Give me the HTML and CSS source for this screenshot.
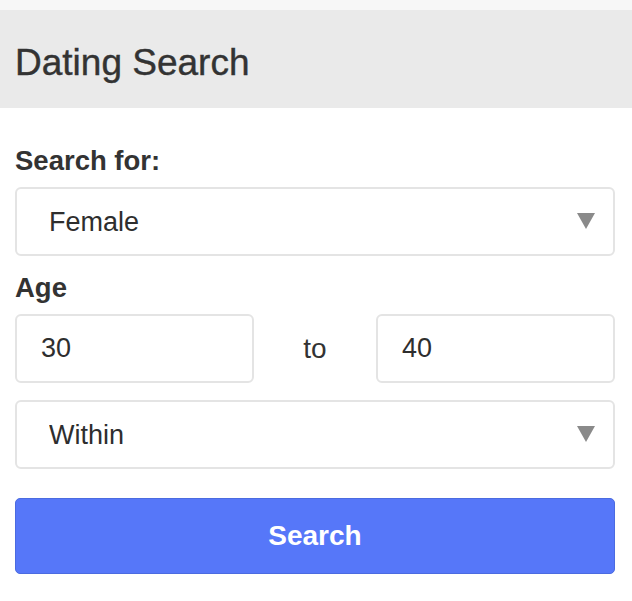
FILE: index.html
```html
<!DOCTYPE html>
<html lang="en">
<head>
<meta charset="utf-8">
<title>Dating Search</title>
<link rel="stylesheet" href="styles.css">
</head>
<body>
<div class="topbar"></div>
<header class="header">
  <h1 class="title">Dating Search</h1>
</header>
<form class="form">
  <label class="label" for="gender">Search for:</label>
  <div class="select-wrap">
    <select id="gender" class="select">
      <option>Female</option>
      <option>Male</option>
    </select>
    <svg class="arrow" viewBox="0 0 18 16" width="18" height="16" aria-hidden="true"><polygon points="0,0 18,0 9,16" /></svg>
  </div>
  <label class="label" for="age-min">Age</label>
  <div class="range">
    <input id="age-min" class="input" type="text" value="30">
    <span class="to">to</span>
    <input class="input" type="text" value="40">
  </div>
  <div class="select-wrap">
    <select class="select">
      <option>Within</option>
    </select>
    <svg class="arrow" viewBox="0 0 18 16" width="18" height="16" aria-hidden="true"><polygon points="0,0 18,0 9,16" /></svg>
  </div>
  <button class="btn" type="button">Search</button>
</form>
</body>
</html>
```

FILE: styles.css
```css
html, body {
  margin: 0;
  padding: 0;
  background: #ffffff;
  font-family: "Liberation Sans", Arial, Helvetica, sans-serif;
  color: #333333;
}

.topbar {
  height: 10px;
  background: #f7f7f7;
}

.header {
  height: 98px;
  background: #eaeaea;
  display: flex;
  align-items: center;
  padding: 7px 0 0 15px;
  box-sizing: border-box;
}

.title {
  margin: 0;
  font-size: 37px;
  line-height: 1;
  font-weight: normal;
  color: #333333;
  -webkit-text-stroke: 0.4px #333333;
}

.form {
  width: 600px;
  padding: 37px 0 0 15px;
  display: flex;
  flex-direction: column;
}

.label {
  display: block;
  font-size: 27.5px;
  line-height: 32px;
  font-weight: bold;
  color: #333333;
  margin: 0 0 10px;
}

.select-wrap {
  position: relative;
  margin-bottom: 16px;
}

.select {
  -webkit-appearance: none;
  appearance: none;
  display: block;
  width: 100%;
  height: 69px;
  box-sizing: border-box;
  border: 2px solid #e4e4e4;
  border-radius: 6px;
  background: #ffffff;
  padding: 0 0 0 32px;
  font-family: inherit;
  font-size: 27px;
  color: #2e2e2e;
  outline: none;
}

.arrow {
  position: absolute;
  right: 20px;
  top: 26px;
  fill: #8a8a8a;
}

.range {
  display: grid;
  grid-template-columns: 1fr 122px 1fr;
  align-items: center;
  margin-bottom: 17px;
}

.input {
  display: block;
  width: 100%;
  height: 69px;
  box-sizing: border-box;
  border: 2px solid #e4e4e4;
  border-radius: 6px;
  padding: 0 0 0 24px;
  font-family: inherit;
  font-size: 27px;
  color: #2e2e2e;
  outline: none;
}

.to {
  text-align: center;
  font-size: 28px;
  color: #333333;
}

.btn {
  margin-top: 13px;
  height: 76px;
  width: 100%;
  border: 1px solid #4b6be0;
  border-radius: 5px;
  background: #5677f9;
  color: #ffffff;
  font-family: inherit;
  font-size: 28px;
  font-weight: bold;
  cursor: pointer;
}
```
